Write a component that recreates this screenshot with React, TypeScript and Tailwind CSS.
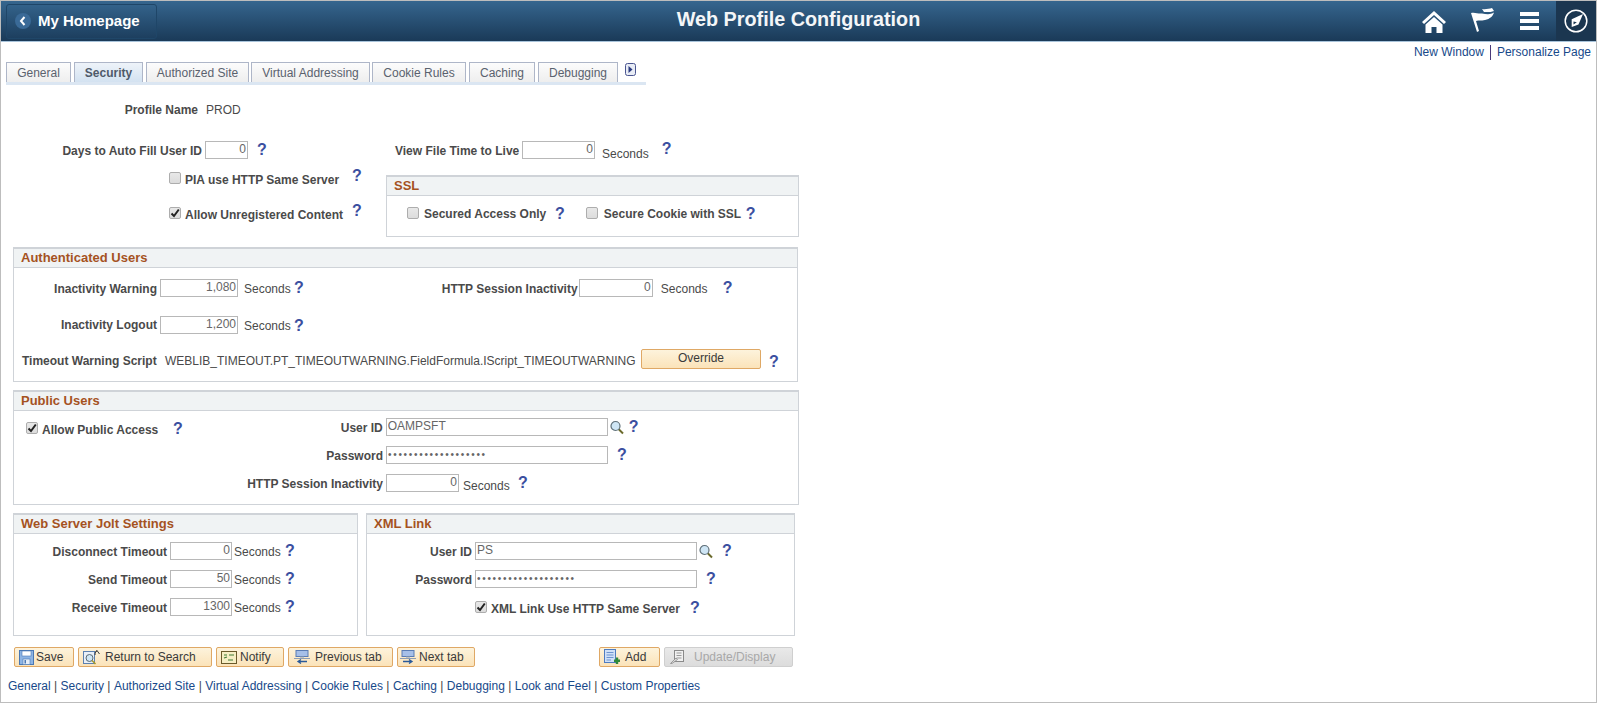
import type { ReactNode } from "react";

const labelCls = "shrink-0 pt-[2px] text-right text-[12px] font-bold text-[#4a4a4a] whitespace-nowrap";
const plainCls = "shrink-0 pt-[2px] text-[12px] text-[#4a4a4a] whitespace-nowrap";
const inputCls =
  "shrink-0 h-[18px] border border-[#b8b8b8] bg-white px-[1px] pb-[2px] text-[12px] leading-[14px] text-[#666] outline-none";

function Lbl({ className, children }: { className: string; children: ReactNode }) {
  return <span className={`${labelCls} ${className}`}>{children}</span>;
}

function Plain({ className, children }: { className: string; children: ReactNode }) {
  return <span className={`${plainCls} ${className}`}>{children}</span>;
}

function Num({ className, value }: { className: string; value: string }) {
  return <input readOnly value={value} className={`${inputCls} text-right ${className}`} />;
}

function Txt({ className, value }: { className: string; value: string }) {
  return <input readOnly value={value} className={`${inputCls} text-left ${className}`} />;
}

/** The blue help mark next to every field. */
function Help({ className }: { className: string }) {
  return (
    <span className={`shrink-0 text-[16px] leading-none font-bold text-[#3b4fa0] ${className}`}>?</span>
  );
}

function Check({ checked, className }: { checked?: boolean; className: string }) {
  return (
    <span
      className={`-mt-[2px] flex h-[12px] w-[12px] shrink-0 items-center justify-center rounded-[2px] border border-[#adadad] bg-gradient-to-b from-[#e8e8e8] to-[#dcdcdc] ${className}`}
    >
      {checked && (
        <svg width="10" height="10" viewBox="0 0 10 10">
          <path d="M1.5 5.5 L4 8 L8.8 1.5" fill="none" stroke="#222" strokeWidth="2" />
        </svg>
      )}
    </span>
  );
}

function Lens({ className }: { className: string }) {
  return (
    <svg width="14" height="15" viewBox="0 0 14 15" className={`shrink-0 ${className}`}>
      <path d="M8.5 9 L13 13.5" stroke="#6b6a2c" strokeWidth="2" />
      <circle cx="5.5" cy="6" r="4.5" fill="#cfe6f5" stroke="#5f6f78" strokeWidth="1.2" />
    </svg>
  );
}

function Box({ title, className, children }: { title: string; className: string; children: ReactNode }) {
  return (
    <div className={`shrink-0 border border-t-2 border-[#cfd3d8] ${className}`}>
      <div className="flex h-[19px] items-center border-b border-[#cfd3d8] bg-[#f0f3f4] pl-[7px] text-[13px] font-bold text-[#a5521f]">
        {title}
      </div>
      {children}
    </div>
  );
}

const tabs = [
  { label: "General", w: "w-[65px]", mr: "mr-[3px]" },
  { label: "Security", w: "w-[69px]", mr: "mr-[3px]", active: true },
  { label: "Authorized Site", w: "w-[103px]", mr: "mr-[2px]" },
  { label: "Virtual Addressing", w: "w-[119px]", mr: "mr-[2px]" },
  { label: "Cookie Rules", w: "w-[94px]", mr: "mr-[3px]" },
  { label: "Caching", w: "w-[66px]", mr: "mr-[3px]" },
  { label: "Debugging", w: "w-[80px]", mr: "mr-0" },
];

const footerLinks = [
  "General",
  "Security",
  "Authorized Site",
  "Virtual Addressing",
  "Cookie Rules",
  "Caching",
  "Debugging",
  "Look and Feel",
  "Custom Properties",
];

function SaveIcon() {
  return (
    <svg width="15" height="15" viewBox="0 0 15 15" className="shrink-0">
      <rect x="0.5" y="0.5" width="14" height="14" fill="#8db4e4" stroke="#4a78b4" />
      <rect x="3" y="1" width="9" height="5" fill="#fff" stroke="#4a78b4" strokeWidth="0.6" />
      <rect x="4" y="9" width="7" height="5.5" fill="#e6eef8" stroke="#4a78b4" strokeWidth="0.6" />
      <rect x="5.5" y="10" width="1.5" height="3.5" fill="#4a78b4" />
    </svg>
  );
}

function SearchIcon() {
  return (
    <svg width="18" height="16" viewBox="0 0 18 16" className="shrink-0">
      <rect x="0.5" y="2.5" width="11" height="12" fill="#e8eff8" stroke="#5b80b0" />
      <circle cx="6.5" cy="9" r="3.5" fill="#cfe6f5" stroke="#5a6a74" />
      <path d="M9 11.5 L12.5 15" stroke="#a89a2c" strokeWidth="1.6" />
      <path d="M12 6 C12 3 13 2 14 1.5 L16.5 5 M14 1.5 L12.5 3.5" fill="none" stroke="#3a3a3a" strokeWidth="1" />
    </svg>
  );
}

function NotifyIcon() {
  return (
    <svg width="16" height="13" viewBox="0 0 16 13" className="shrink-0">
      <rect x="0.5" y="0.5" width="15" height="12" fill="#f6eec4" stroke="#6b5a2a" />
      <path d="M3 4 H6 M8 4 H13 M3 7 L6 6 M7 9 H12" stroke="#3f7a34" strokeWidth="1.2" />
    </svg>
  );
}

function TabIcon({ back }: { back?: boolean }) {
  return (
    <svg width="18" height="14" viewBox="0 0 18 14" className="shrink-0">
      <rect x="3" y="0.5" width="12" height="6" fill="#a6bfe8" stroke="#5a7cb4" />
      <path d="M7 7 H11 M1 8.5 H17" stroke="#8d9db4" strokeWidth="1" />
      {back ? (
        <path d="M14 11.5 H5 M8 9.5 L5 11.5 L8 13.5" fill="none" stroke="#2a5a9a" strokeWidth="1.3" />
      ) : (
        <path d="M4 11.5 H13 M10 9.5 L13 11.5 L10 13.5" fill="none" stroke="#2a5a9a" strokeWidth="1.3" />
      )}
    </svg>
  );
}

function AddIcon() {
  return (
    <svg width="18" height="16" viewBox="0 0 18 16" className="shrink-0">
      <rect x="0.5" y="0.5" width="11" height="13" fill="#cfe0f7" stroke="#4f7cc0" />
      <path d="M2.5 3.5 H9.5 M2.5 6 H9.5 M2.5 8.5 H9.5 M2.5 11 H7" stroke="#6d94cf" strokeWidth="1" />
      <path d="M13 8.5 V15 M10 11.8 H16" stroke="#2f8a3a" strokeWidth="2.4" />
    </svg>
  );
}

function UpdateIcon() {
  return (
    <svg width="15" height="14" viewBox="0 0 15 14" className="shrink-0">
      <rect x="4.5" y="0.5" width="9" height="11" fill="#f0f0f0" stroke="#8a8a8a" />
      <path d="M6.5 3 H11.5 M6.5 5.5 H11.5 M6.5 8 H11.5" stroke="#999" strokeWidth="1" />
      <path d="M0.5 13.5 L6 8 L7.5 9.5 L2 13.5 Z" fill="#ddd" stroke="#8a8a8a" strokeWidth="0.8" />
    </svg>
  );
}

function Btn({
  className,
  icon,
  children,
  disabled,
}: {
  className: string;
  icon?: ReactNode;
  children: ReactNode;
  disabled?: boolean;
}) {
  const tone = disabled
    ? "border-[#cfcfcf] from-[#e9e9e9] to-[#dcdcdc] text-[#a8a8a8]"
    : "border-[#dfa865] from-[#fdf3dc] to-[#fbe3b9] text-[#3a3a3a]";
  return (
    <div
      className={`flex h-[20px] shrink-0 items-center rounded-[2px] border bg-gradient-to-b text-[12px] whitespace-nowrap ${tone} ${className}`}
    >
      {icon}
      {children}
    </div>
  );
}

export default function App() {
  return (
    <div
      className="h-[703px] w-full overflow-hidden border border-[#bdbdbd] bg-white"
      style={{ fontFamily: '"Liberation Sans", Arial, sans-serif' }}
    >
      {/* banner */}
      <header className="grid h-[41px] grid-cols-[1fr_auto_1fr] items-center border-b border-[#a9c4db] bg-gradient-to-b from-[#36668f] to-[#1a3a58]">
        <div className="flex items-center">
          <div className="ml-[5px] flex h-[35px] w-[151px] items-center rounded-[3px] border border-[#1f4668] bg-gradient-to-b from-[#33628a] to-[#1d3f5f]">
            <span className="ml-[8px] flex h-[16px] w-[16px] shrink-0 items-center justify-center rounded-full bg-[#3a6a97]">
              <svg width="8" height="10" viewBox="0 0 8 10">
                <path d="M5.5 1 L2 5 L5.5 9" fill="none" stroke="#fff" strokeWidth="2" />
              </svg>
            </span>
            <span className="ml-[7px] text-[15px] font-bold whitespace-nowrap text-white">My Homepage</span>
          </div>
        </div>
        <h1 className="mb-[3px] text-[19.8px] font-bold text-[#f4f6f8]">Web Profile Configuration</h1>
        <div className="flex items-center justify-end">
          <svg width="24" height="23" viewBox="0 0 24 23" className="mr-[24px]">
            <path d="M12 1 L24 12 L22 14 L12 5 L2 14 L0 12 Z" fill="#fff" />
            <path d="M12 7 L20.5 14.5 V23 H14.5 V17 H9.5 V23 H3.5 V14.5 Z" fill="#fff" />
          </svg>
          <svg width="25" height="26" viewBox="0 0 25 26" className="mr-[25px] -mt-[2px]">
            <path d="M1 6 C5 5 8 7 12 6.5 C16 7 20 8 24 5.5 C23 9 20 12 15 13 C11 14 9 13 6 14 L9 24 L7 25 Z" fill="#fff" />
            <path d="M12 2 C15 2.5 19 2 22 1 L24 4 C20 5.5 17 5 14 5 Z" fill="#fff" />
          </svg>
          <div className="mr-[17px] flex w-[19px] flex-col gap-[3px]">
            <span className="h-[4px] bg-white" />
            <span className="h-[4px] bg-white" />
            <span className="h-[4px] bg-white" />
          </div>
          <div className="flex h-[40px] w-[40px] items-center justify-center bg-[#1b3650]">
            <svg width="24" height="24" viewBox="0 0 24 24">
              <circle cx="12" cy="12" r="10.8" fill="none" stroke="#fff" strokeWidth="1.5" />
              <path d="M7.7 10.3 L19 5 L14.5 15.5 L7.7 18 Z" fill="#fff" />
              <path d="M9.5 12.5 L12.8 13.3 L9.5 15.5 Z" fill="#1b3650" />
            </svg>
          </div>
        </div>
      </header>

      {/* page links */}
      <div className="flex h-[20px] items-center justify-end pr-[5px] text-[12px] text-[#17498a]">
        <span>New Window</span>
        <span className="mx-[6px] h-[15px] w-px bg-[#4a3a7a]" />
        <span>Personalize Page</span>
      </div>

      {/* tabs */}
      <div className="ml-[5px] flex h-[23px] w-[640px] items-start border-b-[3px] border-[#dbe6f2]">
        {tabs.map((t) => (
          <div
            key={t.label}
            className={`flex h-[20px] shrink-0 items-center justify-center border border-b-0 border-[#aeb6c8] bg-gradient-to-b text-[12px] whitespace-nowrap ${t.w} ${t.mr} ${
              t.active
                ? "from-[#eef3f9] to-[#d3e2f1] font-bold text-[#4f5a6a]"
                : "from-[#fcfcfc] to-[#eeeeee] text-[#5a626e]"
            }`}
          >
            {t.label}
          </div>
        ))}
        <svg width="11" height="13" viewBox="0 0 11 13" className="ml-[7px] mt-[1px] shrink-0">
          <rect x="0.5" y="0.5" width="10" height="12" rx="2" fill="#e8ecf5" stroke="#4a5590" />
          <path d="M3.5 3 L7.5 6.5 L3.5 10 Z" fill="#2a3a80" />
        </svg>
      </div>

      {/* profile name */}
      <div className="mt-[14px] flex h-[20px] items-center">
        <Lbl className="w-[197px]">Profile Name</Lbl>
        <Plain className="ml-[8px]">PROD</Plain>
      </div>

      {/* top fields and SSL */}
      <div className="mt-[22px] flex">
        <div className="w-[385px] shrink-0">
          <div className="flex h-[18px] items-center">
            <Lbl className="w-[201px]">Days to Auto Fill User ID</Lbl>
            <Num className="ml-[3px] w-[43px]" value="0" />
            <Help className="ml-[9px]" />
          </div>
          <div className="mt-[11px] flex h-[18px] items-center">
            <Check className="ml-[168px]" />
            <Lbl className="ml-[4px] w-[160px] !text-left">PIA use HTTP Same Server</Lbl>
            <Help className="-mt-[6px] ml-[7px]" />
          </div>
          <div className="mt-[17px] flex h-[18px] items-center">
            <Check checked className="ml-[168px]" />
            <Lbl className="ml-[4px] w-[160px] !text-left">Allow Unregistered Content</Lbl>
            <Help className="-mt-[6px] ml-[7px]" />
          </div>
        </div>
        <div className="shrink-0">
          <div className="flex h-[18px] items-center">
            <Lbl className="ml-[9px] w-[124px]">View File Time to Live</Lbl>
            <Num className="ml-[3px] w-[73px]" value="0" />
            <Plain className="ml-[7px] mt-[6px]">Seconds</Plain>
            <Help className="-mt-[3px] ml-[13px]" />
          </div>
          <Box title="SSL" className="mt-[16px] h-[62px] w-[413px]">
            <div className="mt-[9px] flex h-[18px] items-center">
              <Check className="ml-[20px]" />
              <Lbl className="ml-[5px] w-[122px] !pt-0 !text-left">Secured Access Only</Lbl>
              <Help className="ml-[9px]" />
              <Check className="ml-[21px]" />
              <Lbl className="ml-[6px] w-[136px] !pt-0 !text-left">Secure Cookie with SSL</Lbl>
              <Help className="ml-[6px]" />
            </div>
          </Box>
        </div>
      </div>

      {/* authenticated users */}
      <Box title="Authenticated Users" className="ml-[12px] mt-[10px] h-[135px] w-[785px]">
        <div className="mt-[11px] flex h-[18px] items-center">
          <Lbl className="w-[143px]">Inactivity Warning</Lbl>
          <Num className="ml-[3px] w-[78px]" value="1,080" />
          <Plain className="ml-[6px] w-[46px]">Seconds</Plain>
          <Help className="ml-[4px]" />
          <Lbl className="ml-[138px] w-[134px]">HTTP Session Inactivity</Lbl>
          <Num className="ml-[3px] w-[74px]" value="0" />
          <Plain className="ml-[8px] w-[46px]">Seconds</Plain>
          <Help className="ml-[16px]" />
        </div>
        <div className="mt-[19px] flex h-[18px] items-center">
          <Lbl className="w-[143px] !pt-0">Inactivity Logout</Lbl>
          <Num className="ml-[3px] w-[78px]" value="1,200" />
          <Plain className="ml-[6px] w-[46px]">Seconds</Plain>
          <Help className="ml-[4px] mt-[2px]" />
        </div>
        <div className="mt-[15px] flex h-[20px] items-center">
          <Lbl className="ml-[8px] mt-[2px] w-[135px] !text-left">Timeout Warning Script</Lbl>
          <Plain className="ml-[8px] mt-[2px] w-[476px]">WEBLIB_TIMEOUT.PT_TIMEOUTWARNING.FieldFormula.IScript_TIMEOUTWARNING</Plain>
          <Btn className="w-[120px] justify-center pb-[2px]">Override</Btn>
          <Help className="ml-[8px] mt-[6px]" />
        </div>
      </Box>

      {/* public users */}
      <Box title="Public Users" className="ml-[12px] mt-[8px] h-[115px] w-[786px]">
        <div className="mt-[7px] flex h-[18px] items-center">
          <Check checked className="ml-[12px] mt-[2px]" />
          <Lbl className="ml-[4px] mt-[4px] w-[118px] !text-left">Allow Public Access</Lbl>
          <Help className="ml-[13px] mt-[4px]" />
          <Lbl className="ml-[154px] w-[46px]">User ID</Lbl>
          <Txt className="ml-[3px] w-[222px]" value="OAMPSFT" />
          <Lens className="ml-[2px]" />
          <Help className="ml-[5px]" />
        </div>
        <div className="mt-[10px] flex h-[18px] items-center">
          <Lbl className="w-[369px]">Password</Lbl>
          <Txt className="ml-[3px] w-[222px] !text-[10px] tracking-[1.7px]" value="•••••••••••••••••••" />
          <Help className="ml-[9px]" />
        </div>
        <div className="mt-[10px] flex h-[18px] items-center">
          <Lbl className="w-[369px]">HTTP Session Inactivity</Lbl>
          <Num className="ml-[3px] w-[73px]" value="0" />
          <Plain className="ml-[4px] mt-[3px] w-[46px]">Seconds</Plain>
          <Help className="ml-[9px]" />
        </div>
      </Box>

      {/* jolt and xml */}
      <div className="ml-[12px] mt-[8px] flex">
        <Box title="Web Server Jolt Settings" className="h-[123px] w-[345px]">
          <div className="mt-[8px] flex h-[18px] items-center">
            <Lbl className="w-[153px]">Disconnect Timeout</Lbl>
            <Num className="ml-[3px] w-[62px]" value="0" />
            <Plain className="ml-[2px] w-[46px]">Seconds</Plain>
            <Help className="ml-[5px]" />
          </div>
          <div className="mt-[10px] flex h-[18px] items-center">
            <Lbl className="w-[153px]">Send Timeout</Lbl>
            <Num className="ml-[3px] w-[62px]" value="50" />
            <Plain className="ml-[2px] w-[46px]">Seconds</Plain>
            <Help className="ml-[5px]" />
          </div>
          <div className="mt-[10px] flex h-[18px] items-center">
            <Lbl className="w-[153px]">Receive Timeout</Lbl>
            <Num className="ml-[3px] w-[62px]" value="1300" />
            <Plain className="ml-[2px] w-[46px]">Seconds</Plain>
            <Help className="ml-[5px]" />
          </div>
        </Box>
        <Box title="XML Link" className="ml-[8px] h-[123px] w-[429px]">
          <div className="mt-[8px] flex h-[18px] items-center">
            <Lbl className="w-[105px]">User ID</Lbl>
            <Txt className="ml-[3px] w-[222px]" value="PS" />
            <Lens className="ml-[2px]" />
            <Help className="ml-[9px]" />
          </div>
          <div className="mt-[10px] flex h-[18px] items-center">
            <Lbl className="w-[105px]">Password</Lbl>
            <Txt className="ml-[3px] w-[222px] !text-[10px] tracking-[1.7px]" value="•••••••••••••••••••" />
            <Help className="ml-[9px]" />
          </div>
          <div className="mt-[11px] flex h-[18px] items-center">
            <Check checked className="ml-[108px]" />
            <Lbl className="ml-[4px] w-[195px] !text-left">XML Link Use HTTP Same Server</Lbl>
            <Help className="ml-[4px]" />
          </div>
        </Box>
      </div>

      {/* toolbar */}
      <div className="ml-[13px] mt-[11px] flex items-center">
        <Btn className="w-[60px] pl-[4px]" icon={<SaveIcon />}>
          <span className="ml-[2px]">Save</span>
        </Btn>
        <Btn className="ml-[4px] w-[134px] pl-[4px]" icon={<SearchIcon />}>
          <span className="ml-[4px]">Return to Search</span>
        </Btn>
        <Btn className="ml-[4px] w-[68px] pl-[4px]" icon={<NotifyIcon />}>
          <span className="ml-[3px]">Notify</span>
        </Btn>
        <Btn className="ml-[4px] w-[105px] pl-[4px]" icon={<TabIcon back />}>
          <span className="ml-[4px]">Previous tab</span>
        </Btn>
        <Btn className="ml-[4px] w-[78px] pl-[1px]" icon={<TabIcon />}>
          <span className="ml-[2px]">Next tab</span>
        </Btn>
        <Btn className="ml-[124px] w-[61px] pl-[4px]" icon={<AddIcon />}>
          <span className="ml-[3px]">Add</span>
        </Btn>
        <Btn disabled className="ml-[4px] w-[129px] pl-[5px]" icon={<UpdateIcon />}>
          <span className="ml-[9px]">Update/Display</span>
        </Btn>
      </div>

      {/* footer links */}
      <div className="ml-[7px] mt-[10px] flex h-[18px] items-center text-[12px] text-[#17498a]">
        {footerLinks.map((l, i) => (
          <span key={l} className="whitespace-nowrap">
            {i > 0 && <span className="mx-[3.4px] text-[#444]">|</span>}
            {l}
          </span>
        ))}
      </div>
    </div>
  );
}
